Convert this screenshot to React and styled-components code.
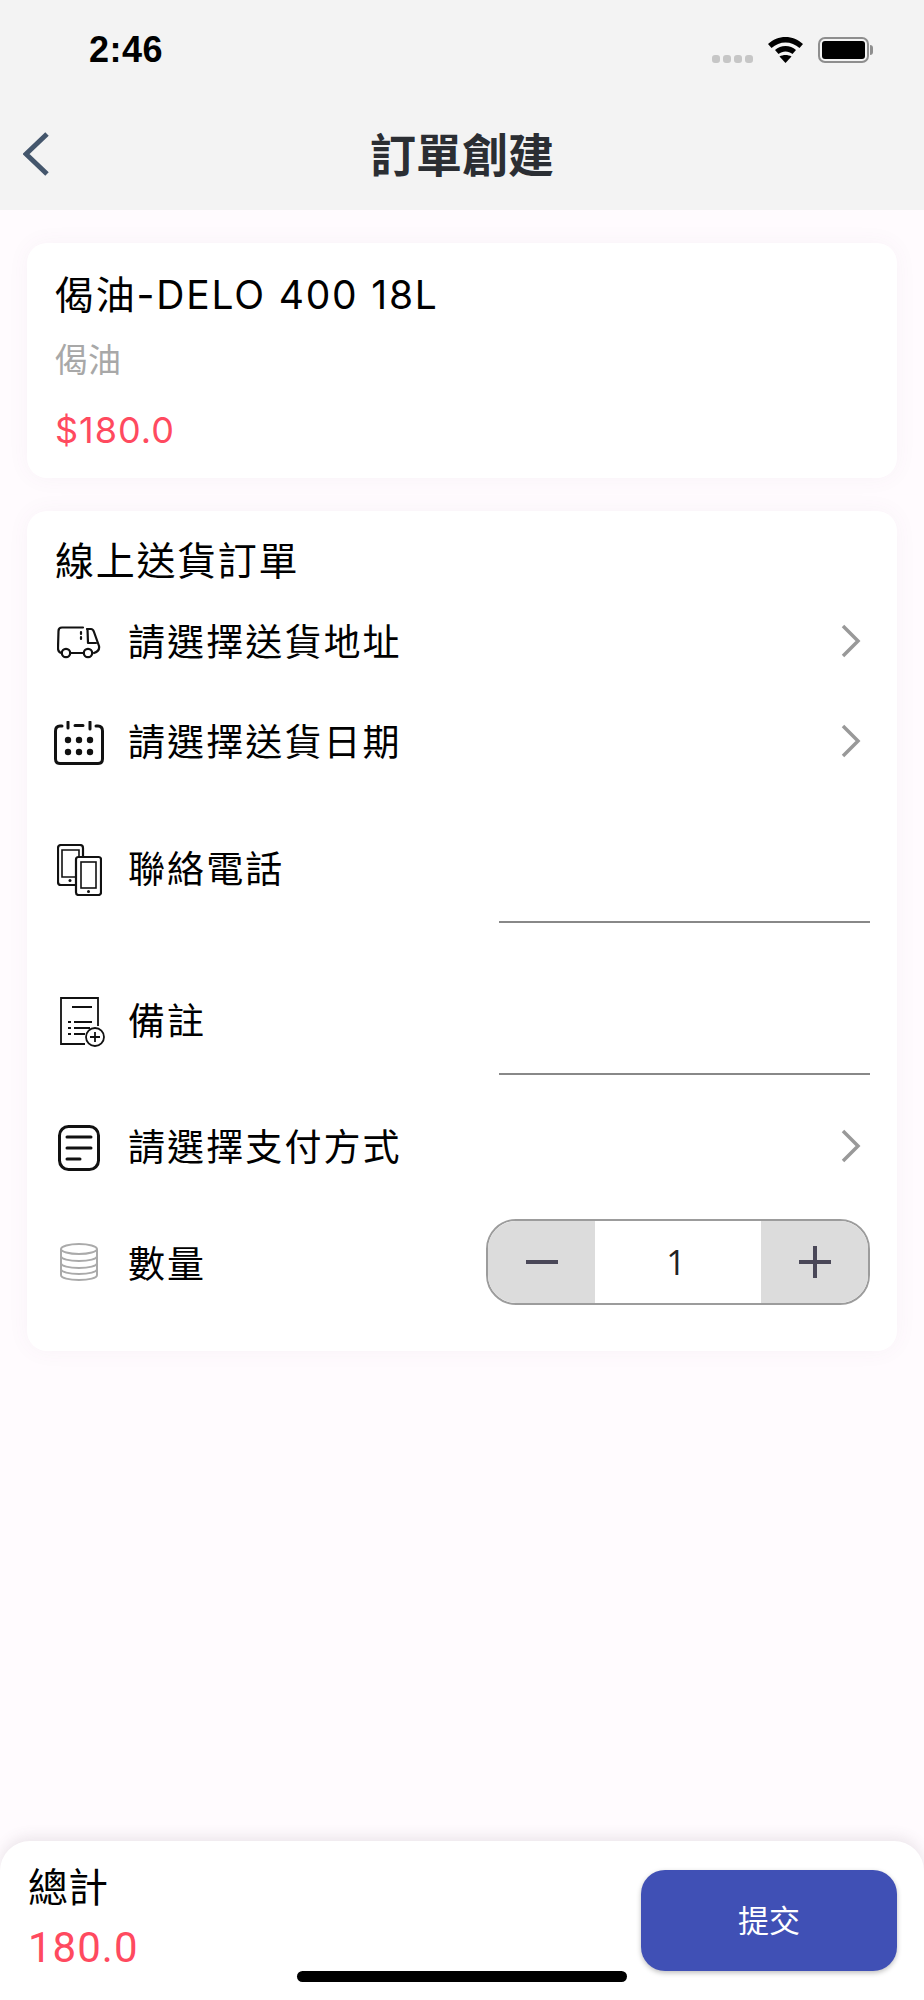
import React from 'react';
import styled, { createGlobalStyle } from 'styled-components';

const GlobalStyle = createGlobalStyle`
  html, body {
    margin: 0;
    padding: 0;
    background: #fffbfe;
  }
  * {
    box-sizing: border-box;
  }
`;

const FONT = `Inter, 'Noto Sans CJK TC', sans-serif`;

const TruckIcon = () => (
  <svg width="44" height="34" viewBox="0 0 44 34" fill="none" stroke="#111" strokeWidth="2.200" strokeLinecap="round" strokeLinejoin="round">
    <path d="M26 1.500H5Q1.500 1.500 1.500 5L1 22Q1 26 4.500 27" />
    <path d="M13 27H27" />
    <circle cx="9" cy="27" r="4.200" />
    <circle cx="31" cy="27" r="4.200" />
    <path d="M30 3H34Q36 3 37 6L42 20Q43 25 37 27" />
    <path d="M30.500 3L31 17H39" />
    <path d="M24 6V16" strokeDasharray="2 3" />
  </svg>
);

const CalendarIcon = () => (
  <svg width="50" height="44" viewBox="0 0 50 44" fill="none" stroke="#111" strokeWidth="3" strokeLinecap="round">
    <path d="M8 5H6Q1.500 5 1.500 10V38Q1.500 42.500 6 42.500H44Q48.500 42.500 48.500 38V10Q48.500 5 44 5H42" />
    <path d="M14 1V7M36 1V8M21 4.500H29" />
    <g fill="#111" stroke="none">
      <circle cx="14" cy="19" r="3.200" />
      <circle cx="25" cy="19" r="3.200" />
      <circle cx="36" cy="19" r="3.200" />
      <circle cx="14" cy="31" r="3.200" />
      <circle cx="25" cy="31" r="3.200" />
      <circle cx="36" cy="31" r="3.200" />
    </g>
  </svg>
);

const PhonesIcon = () => (
  <svg width="45" height="52" viewBox="0 0 45 52" fill="none" stroke="#111" strokeWidth="2.200">
    <path d="M18 41H4Q1 41 1 38V4Q1 1 4 1H23Q26 1 26 4V12" />
    <path d="M18 33H5V6H22V12" strokeWidth="1.600" />
    <rect x="19" y="13" width="25" height="38" rx="2.500" />
    <rect x="24" y="18" width="15" height="26" strokeWidth="1.600" />
    <circle cx="13" cy="36.500" r="1.500" fill="#111" stroke="none" />
    <circle cx="31.500" cy="47.500" r="1.500" fill="#111" stroke="none" />
  </svg>
);

const MemoIcon = () => (
  <svg width="54" height="50" viewBox="-8 0 54 50" fill="none" stroke="#111" strokeWidth="1.800">
    <path d="M25 47H1V1H38V29" />
    <path d="M12 10H32M8 25H11M14 25H32M8 31H11M14 31H30M8 37H11M14 37H25" />
    <circle cx="35" cy="40" r="9" />
    <path d="M35 35V45M30 40H40" />
  </svg>
);

const PaymentIcon = () => (
  <svg width="42" height="46" viewBox="0 0 42 46" fill="none" stroke="#111" strokeWidth="3" strokeLinecap="round">
    <rect x="1.500" y="1.500" width="39" height="43" rx="9" />
    <path d="M9 12H33M9 23H33M9 34H22" />
  </svg>
);

const CoinsIcon = () => (
  <svg width="38" height="44" viewBox="0 0 38 44" fill="none" stroke="#aaa" strokeWidth="2">
    <ellipse cx="19" cy="6" rx="18" ry="5" />
    <path d="M1 6V32C1 35 9 37 19 37S37 35 37 32V6" />
    <path d="M1 13C1 16 9 18 19 18S37 16 37 13" />
    <path d="M1 20C1 23 9 25 19 25S37 23 37 20" />
    <path d="M1 26C1 29 9 31 19 31S37 29 37 26" />
  </svg>
);

const Chevron = () => (
  <ChevronSlot>
    <svg width="20" height="34" viewBox="0 0 20 34" fill="none" stroke="#999" strokeWidth="3.500">
      <path d="M2 2L17 17L2 32" />
    </svg>
  </ChevronSlot>
);

const OrderCreate = () => (
  <Page>
    <GlobalStyle />
    <Header>
      <StatusBar>
        <Clock>2:46</Clock>
        <StatusIcons>
          <SignalDots>
            <i /><i /><i /><i />
          </SignalDots>
          <svg width="35" height="26" viewBox="0 0 35 26">
            <path d="M17.500 0C11 0 5 2.500 0 7L3.500 11C7.500 7.500 12.500 5.500 17.500 5.500S27.500 7.500 31.500 11L35 7C30 2.500 24 0 17.500 0Z" fill="#000" />
            <path d="M17.500 9C13.500 9 10 10.500 7 13L10.500 17C12.500 15.500 15 14.500 17.500 14.500S22.500 15.500 24.500 17L28 13C25 10.500 21.500 9 17.500 9Z" fill="#000" />
            <path d="M11.500 19.500L17.500 26L23.500 19.500C20 17.500 15 17.500 11.500 19.500Z" fill="#000" />
          </svg>
          <Battery />
        </StatusIcons>
      </StatusBar>
      <NavBar>
        <BackButton>
          <svg width="26" height="44" viewBox="0 0 26 44" fill="none" stroke="#44566c" strokeWidth="5">
            <path d="M24 2L3 22L24 42" />
          </svg>
        </BackButton>
        <NavTitle>訂單創建</NavTitle>
      </NavBar>
    </Header>

    <Content>
      <ProductCard>
        <ProductName>偈油-DELO 400 18L</ProductName>
        <ProductCategory>偈油</ProductCategory>
        <ProductPrice>$180.0</ProductPrice>
      </ProductCard>

      <FormCard>
        <FormHeading>線上送貨訂單</FormHeading>
        <Row $height={100}>
          <IconSlot><TruckIcon /></IconSlot>
          <RowLabel>請選擇送貨地址</RowLabel>
          <Chevron />
        </Row>
        <Row $height={100}>
          <IconSlot><CalendarIcon /></IconSlot>
          <RowLabel>請選擇送貨日期</RowLabel>
          <Chevron />
        </Row>
        <Row $height={130} $top={24}>
          <IconSlot><PhonesIcon /></IconSlot>
          <RowLabel>聯絡電話</RowLabel>
          <FieldLine />
        </Row>
        <Row $height={152} $top={46}>
          <IconSlot><MemoIcon /></IconSlot>
          <RowLabel>備註</RowLabel>
          <FieldLine />
        </Row>
        <Row $height={123} $top={23}>
          <IconSlot><PaymentIcon /></IconSlot>
          <RowLabel>請選擇支付方式</RowLabel>
          <Chevron />
        </Row>
        <Row $height={134}>
          <IconSlot><CoinsIcon /></IconSlot>
          <RowLabel>數量</RowLabel>
          <Stepper>
            <StepButton>
              <svg width="32" height="32" viewBox="0 0 32 32" stroke="#4a4858" strokeWidth="4">
                <path d="M0 16H32" />
              </svg>
            </StepButton>
            <StepValue>1</StepValue>
            <StepButton>
              <svg width="32" height="32" viewBox="0 0 32 32" stroke="#4a4858" strokeWidth="4">
                <path d="M0 16H32M16 0V32" />
              </svg>
            </StepButton>
          </Stepper>
        </Row>
      </FormCard>
    </Content>

    <BottomBar>
      <TotalBox>
        <TotalLabel>總計</TotalLabel>
        <TotalValue>180.0</TotalValue>
      </TotalBox>
      <SubmitButton>提交</SubmitButton>
      <HomeIndicator />
    </BottomBar>
  </Page>
);

const Page = styled.div`
  display: flex;
  flex-direction: column;
  width: 924px;
  height: 2000px;
  overflow: hidden;
  background: #fffbfe;
  font-family: ${FONT};
  color: #000;
`;

const Header = styled.header`
  flex: none;
  height: 210px;
  background: #f3f3f3;
`;

const StatusBar = styled.div`
  display: flex;
  align-items: center;
  justify-content: space-between;
  height: 100px;
  padding: 0 51px 0 89px;
`;

const Clock = styled.span`
  font-family: 'Liberation Sans', sans-serif;
  font-size: 36px;
  font-weight: 700;
  letter-spacing: 0.5px;
`;

const StatusIcons = styled.div`
  display: flex;
  align-items: center;
  height: 26px;
`;

const SignalDots = styled.div`
  display: flex;
  gap: 3px;
  align-self: flex-end;
  margin-right: 15px;

  i {
    width: 8px;
    height: 8px;
    border-radius: 3px;
    background: #c6c6c6;
  }
`;

const Battery = styled.div`
  position: relative;
  width: 51px;
  height: 26px;
  margin-left: 15px;
  margin-right: 4px;
  border: 2px solid #8e8e8e;
  border-radius: 7px;
  padding: 2px;
  background: #000;
  background-clip: content-box;

  &::after {
    content: '';
    position: absolute;
    top: 6px;
    right: -6px;
    width: 3px;
    height: 10px;
    border-radius: 0 3px 3px 0;
    background: #8e8e8e;
  }
`;

const NavBar = styled.div`
  position: relative;
  display: flex;
  align-items: center;
  justify-content: center;
  height: 110px;
`;

const BackButton = styled.div`
  position: absolute;
  left: 23px;
  top: 32px;
  line-height: 0;
`;

const NavTitle = styled.h1`
  margin: 0;
  font-size: 46px;
  font-weight: 700;
  line-height: 60px;
  color: #2b2e33;
`;

const Content = styled.main`
  flex: 1;
  display: flex;
  flex-direction: column;
  gap: 33px;
  padding: 33px 27px 0;
`;

const Card = styled.section`
  background: #fff;
  border-radius: 20px;
  box-shadow: 0 0 22px rgba(110, 70, 110, 0.05);
`;

const ProductCard = styled(Card)`
  height: 235px;
  padding: 27px 28px 0;
`;

const ProductName = styled.div`
  font-size: 39px;
  line-height: 50px;
  letter-spacing: 1.8px;
`;

const ProductCategory = styled.div`
  margin-top: 18px;
  font-size: 33px;
  line-height: 44px;
  color: #a8a8a8;
`;

const ProductPrice = styled.div`
  margin-top: 23px;
  font-size: 36px;
  line-height: 50px;
  letter-spacing: 1px;
  color: #ff4a5f;
`;

const FormCard = styled(Card)`
  height: 840px;
  padding: 28px 27px 0 28px;
`;

const FormHeading = styled.h2`
  margin: 0 0 10px;
  font-size: 39px;
  font-weight: 400;
  line-height: 44px;
  letter-spacing: 1.7px;
`;

const Row = styled.div`
  display: flex;
  align-items: center;
  height: ${(props) => props.$height}px;
  padding-top: ${(props) => props.$top || 0}px;
`;

const IconSlot = styled.div`
  flex: none;
  display: flex;
  justify-content: center;
  width: 48px;
  margin-right: 25px;

  svg {
    flex: none;
  }
`;

const RowLabel = styled.span`
  font-size: 37px;
  letter-spacing: 2.1px;
  line-height: 50px;
`;

const ChevronSlot = styled.div`
  margin-left: auto;
  margin-right: 9px;
  margin-bottom: 4px;
  line-height: 0;
`;

const FieldLine = styled.div`
  align-self: flex-end;
  width: 371px;
  margin-left: auto;
  border-bottom: 2px solid #888;
`;

const Stepper = styled.div`
  display: grid;
  grid-template-columns: 107px 1fr 107px;
  width: 384px;
  height: 86px;
  margin-left: auto;
  margin-bottom: 6px;
  border: 2px solid #9c9c9c;
  border-radius: 30px;
  overflow: hidden;
`;

const StepButton = styled.div`
  display: flex;
  align-items: center;
  justify-content: center;
  background: #dcdcdc;
`;

const StepValue = styled.div`
  display: flex;
  align-items: center;
  justify-content: center;
  padding-right: 4px;
  background: #fff;
  font-family: 'Open Sans', sans-serif;
  font-size: 34px;
  color: #222;
`;

const BottomBar = styled.footer`
  position: relative;
  flex: none;
  display: flex;
  align-items: flex-start;
  justify-content: space-between;
  height: 159px;
  padding: 29px 27px 0 28px;
  background: #fff;
  border-radius: 30px 30px 0 0;
  box-shadow: 0 -4px 14px rgba(90, 70, 90, 0.12);
`;

const TotalBox = styled.div`
  display: flex;
  flex-direction: column;
  margin-top: -4px;
`;

const TotalLabel = styled.span`
  font-size: 40px;
  line-height: 44px;
`;

const TotalValue = styled.span`
  margin-top: 13px;
  font-family: Roboto, sans-serif;
  font-size: 42px;
  line-height: 50px;
  letter-spacing: 1px;
  color: #ff4a5f;
`;

const SubmitButton = styled.button`
  width: 256px;
  height: 101px;
  padding: 0 0 4px;
  border: none;
  border-radius: 24px;
  background: #4050b5;
  box-shadow: 0 2px 5px rgba(0, 0, 0, 0.25);
  color: #fff;
  font-family: ${FONT};
  font-size: 31px;
`;

const HomeIndicator = styled.div`
  position: absolute;
  left: 297px;
  top: 130px;
  width: 330px;
  height: 11px;
  border-radius: 6px;
  background: #000;
`;

export default OrderCreate;
